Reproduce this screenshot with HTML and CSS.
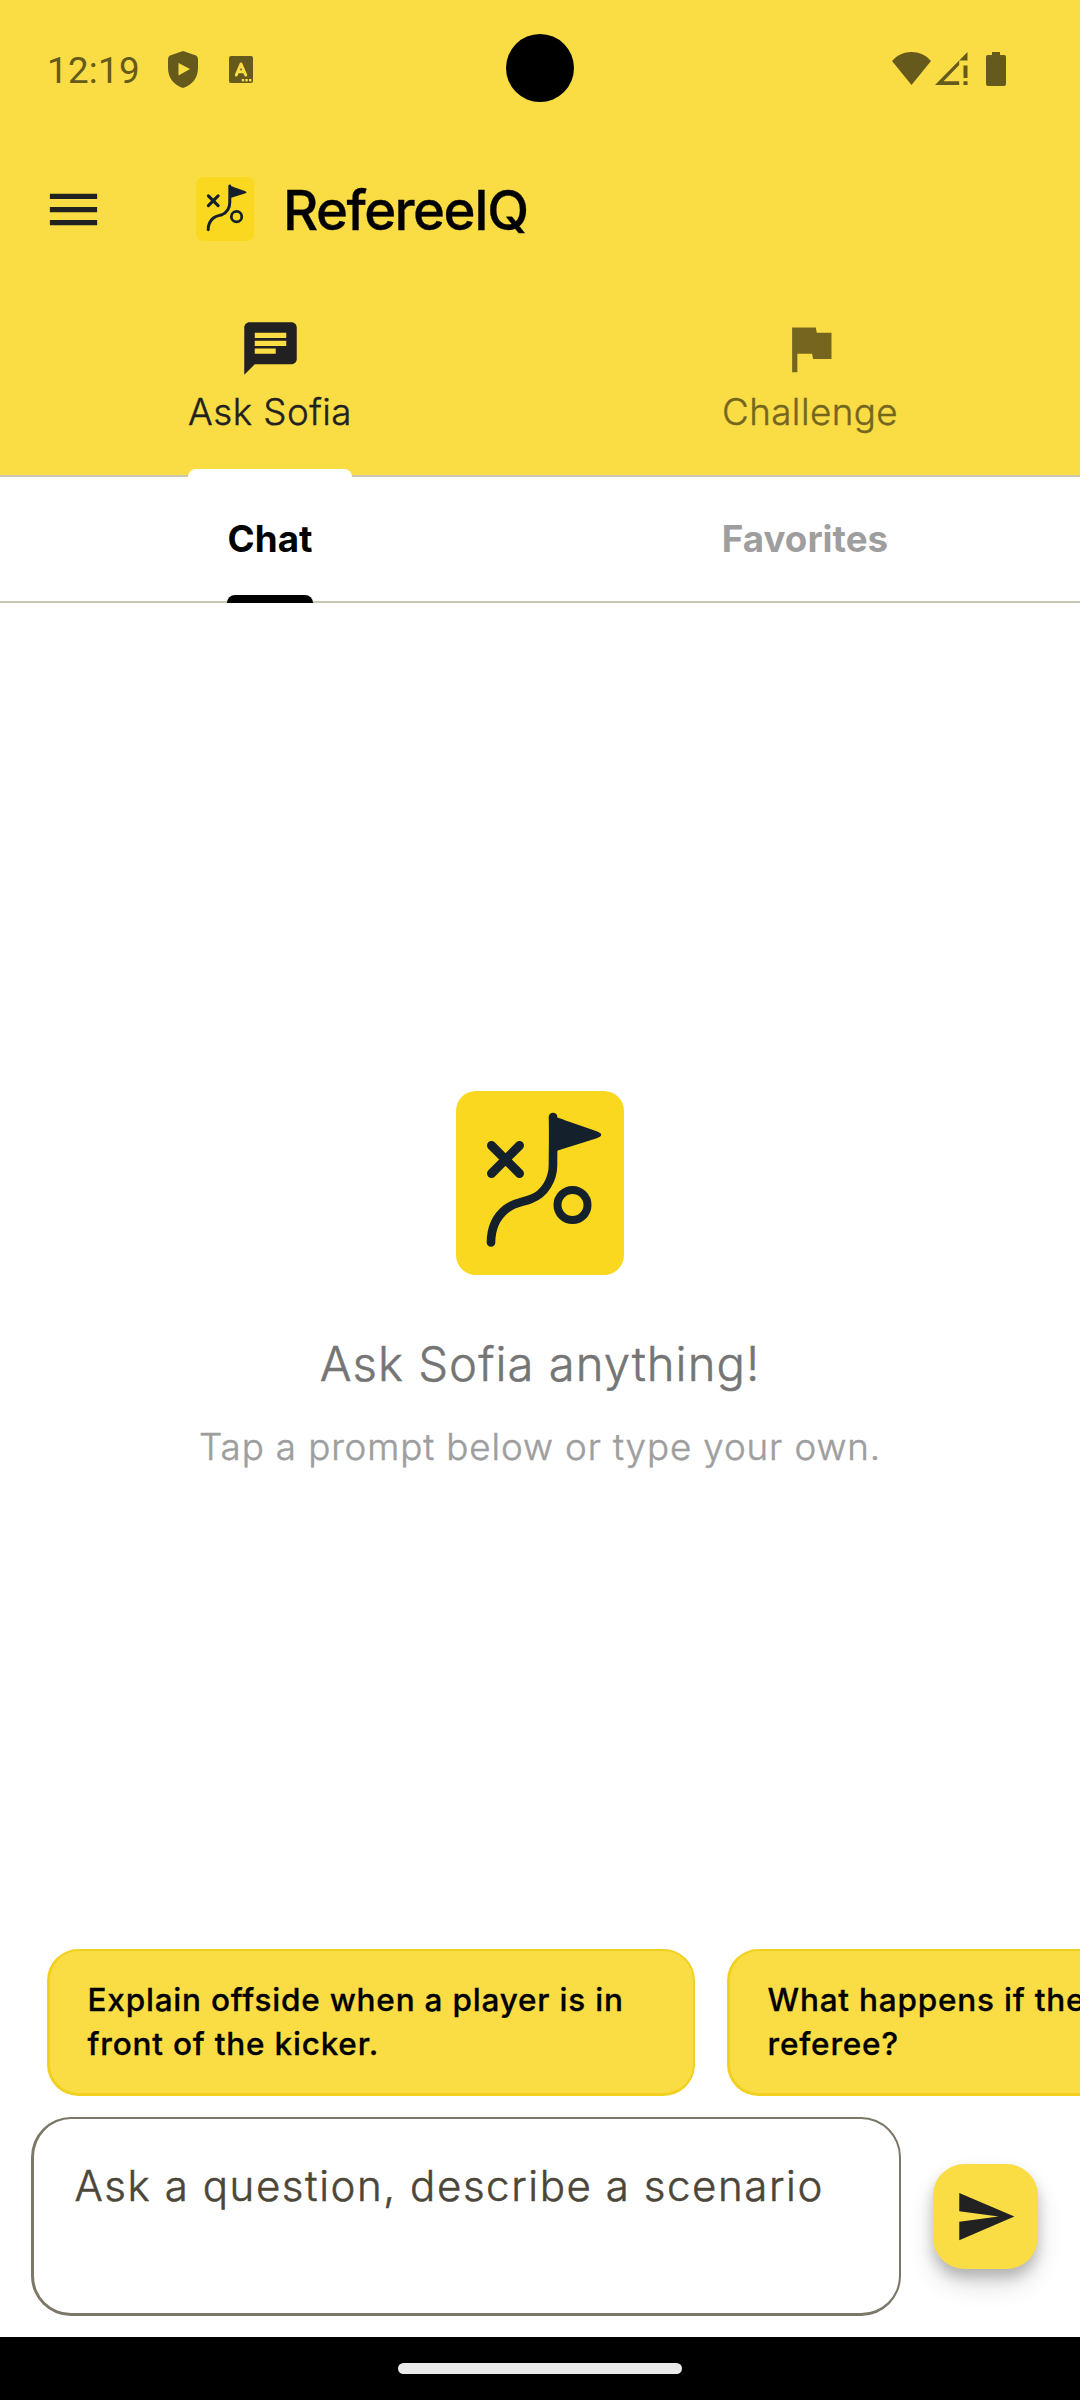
FILE: index.html
```html
<!DOCTYPE html>
<html lang="en">
<head>
<meta charset="utf-8">
<title>RefereeIQ</title>
<link rel="stylesheet" href="styles.css">
</head>
<body>
<svg class="defs" aria-hidden="true">
  <symbol id="logo" viewBox="0 0 168 184">
    <rect width="168" height="184" rx="20" fill="#f9d81f"/>
    <g fill="none" stroke="#14202b" stroke-width="9" stroke-linecap="round" stroke-linejoin="round">
      <path d="M35.5 54.5 63.5 82.500M63.500 54.500 35.500 82.500"/>
      <path stroke-width="8.600" d="M97 26C97.500 42 97 58 97 74C97 88 89 103 75 108C68 111 59 111 50 118C40 126 35 138 35 151.500"/>
      <circle stroke-width="8" cx="116.500" cy="114" r="15"/>
    </g>
    <path d="M97 26C102 26 108 29 114 31L140 40C147 42.500 147 45 140 47.500L97 61Z" fill="#14202b"/>
  </symbol>
</svg>
<div class="screen">
  <header class="top">
    <div class="status">
      <div class="status-left">
        <span class="clock">12:19</span>
        <svg class="shield" viewBox="0 0 30 37"><path fill-rule="evenodd" d="M15 0 28 4.500Q30 5.500 30 8V17C30 27 24 34 15 37C6 34 0 27 0 17V8Q0 5.500 2 4.500ZM10.500 12V24.500L22 18Z"/></svg>
        <svg class="lang" viewBox="0 0 24 27"><rect width="24" height="27" rx="2"/><g class="cut-line"><path d="M7.300 19 12 8 16.700 19M9 15.800H15"/></g><g class="cut"><rect x="12.800" y="23" width="2.400" height="2.400"/><rect x="16.400" y="23" width="2.400" height="2.400"/><rect x="20" y="23" width="2.400" height="2.400"/></g></svg>
      </div>
      <div class="camera"></div>
      <div class="status-right">
        <svg class="wifi" viewBox="0 0 39 33"><path d="M0 9C10-3 29-3 39 9L19.500 33Z"/></svg>
        <svg class="signal" viewBox="0 0 33 33"><path fill-rule="evenodd" d="M32.500 0V8.500H24.200V13L8.500 29.300H24.200V33H0ZM28.500 13.500H32.500V26H28.500ZM28.500 29.300H32.500V33H28.500Z"/></svg>
        <svg class="battery" viewBox="0 0 20 34"><path d="M6 0H14V3H18Q20 3 20 5V32Q20 34 18 34H2Q0 34 0 32V5Q0 3 2 3H6Z"/></svg>
      </div>
    </div>
    <div class="appbar">
      <svg class="icon" viewBox="0 0 24 24"><path d="M3 18h18v-2H3v2zm0-5h18v-2H3v2zm0-7v2h18V6H3z"/></svg>
      <svg class="brand-logo"><use href="#logo"/></svg>
      <h1 class="brand">RefereeIQ</h1>
    </div>
    <nav class="tabs">
      <a class="tab active">
        <svg class="icon" viewBox="0 0 24 24"><path d="M20 2H4c-1.100 0-1.990.900-1.990 2L2 22l4-4h14c1.100 0 2-.900 2-2V4c0-1.100-.900-2-2-2zM6 9h12v2H6V9zm8 5H6v-2h8v2zm4-6H6V6h12v2z"/></svg>
        <span class="tab-label">Ask Sofia</span>
      </a>
      <a class="tab">
        <svg class="icon" viewBox="0 0 24 24"><path d="M14.400 6L14 4H5v17h2v-7h5.600l.400 2h7V6z"/></svg>
        <span class="tab-label">Challenge</span>
      </a>
    </nav>
  </header>
  <nav class="subtabs">
    <a class="subtab selected"><span>Chat</span></a>
    <a class="subtab"><span>Favorites</span></a>
  </nav>
  <main class="empty">
    <svg class="hero-logo"><use href="#logo"/></svg>
    <p class="headline">Ask Sofia anything!</p>
    <p class="hint">Tap a prompt below or type your own.</p>
  </main>
  <div class="prompts">
    <button class="chip">Explain offside when a player is in<br>front of the kicker.</button>
    <button class="chip">What happens if the ball hits the<br>referee?</button>
  </div>
  <div class="composer">
    <div class="field">Ask a question, describe a scenario</div>
    <button class="send"><svg class="icon" viewBox="0 0 24 24"><path d="M2.010 21L23 12 2.010 3 2 10l15 2-15 2z"/></svg></button>
  </div>
  <footer class="navbar"><div class="pill"></div></footer>
</div>
</body>
</html>
```

FILE: styles.css
```css
* { box-sizing: border-box; }
body { margin: 0; background: #fff; font-family: Inter, "Open Sans", sans-serif; }
h1, p { margin: 0; }
button { font: inherit; border: 0; }
.defs { position: absolute; width: 0; height: 0; }
.screen { width: 1080px; height: 2400px; display: flex; flex-direction: column; overflow: hidden; background: #fff; }
.icon { width: 63px; height: 63px; fill: #212121; display: block; flex: none; }

.top { height: 477px; flex: none; background: #fadd45; border-bottom: 2px solid #cdc5b4; display: flex; flex-direction: column; }
.status { height: 136px; flex: none; display: grid; grid-template-columns: 1fr 68px 1fr; align-items: center; fill: #655a1c; color: #655a1c; }
.status-left { display: flex; align-items: center; padding: 6px 0 0 47px; }
.clock { width: 121px; font: 36.75px/40px Roboto, sans-serif; letter-spacing: 0.28px; }
.shield { width: 30px; height: 37px; margin-top: -4px; }
.lang { width: 24px; height: 27px; margin: -4px 0 0 31px; }
.cut { fill: #fadd45; }
.cut-line { fill: none; stroke: #fadd45; stroke-width: 3; stroke-linecap: round; stroke-linejoin: round; }
.camera { width: 68px; height: 68px; border-radius: 50%; background: #000; }
.status-right { display: flex; justify-content: flex-end; align-items: flex-start; padding: 1px 74px 0 0; }
.wifi { width: 39px; height: 33px; }
.signal { width: 33px; height: 33px; margin: 0 18px 0 4px; }
.battery { width: 20px; height: 34px; }

.appbar { height: 147px; flex: none; display: flex; align-items: center; padding: 0 42px; }
.brand-logo { width: 58.500px; height: 64px; margin: -2px 0 0 91px; flex: none; }
.brand { margin-left: 28.500px; font-size: 54.500px; font-weight: 500; letter-spacing: -1.550px; line-height: 64px; color: #000; -webkit-text-stroke: 0.3px currentColor; }

.tabs { flex: 1; display: grid; grid-template-columns: 1fr 1fr; }
.tab { position: relative; display: flex; flex-direction: column; align-items: center; padding-top: 33.500px; color: #74661f; }
.tab .icon { fill: currentColor; }
.tab.active { color: #212121; }
.tab-label { font-size: 36.75px; font-weight: 300; line-height: 52px; margin-top: 6px; letter-spacing: 0.45px; -webkit-text-stroke: 0.4px currentColor; }
.tab.active::after { content: ""; position: absolute; left: 188px; bottom: -2px; width: 164px; height: 8px; background: #fff; border-radius: 8px 8px 0 0; }

.subtabs { height: 126px; flex: none; display: grid; grid-template-columns: 1fr 1fr; border-bottom: 2px solid #cdc5b4; font-size: 36.75px; font-weight: 700; line-height: 124px; text-align: center; }
.subtab { position: relative; color: #9e9e9e; }
.subtab:last-child { padding-right: 10px; }
.subtab.selected { color: #000; }
.subtab.selected::after { content: ""; position: absolute; left: 227px; bottom: -2px; width: 86px; height: 8px; background: #000; border-radius: 8px 8px 0 0; }

.empty { flex: 1; display: flex; flex-direction: column; align-items: center; padding-top: 488px; font-weight: 300; -webkit-text-stroke: 0.5px currentColor; }
.hero-logo { width: 168px; height: 184px; }
.headline { margin-top: 55px; font-size: 47.25px; line-height: 68px; letter-spacing: 1.010px; color: #757575; }
.hint { margin-top: 23px; font-size: 36.75px; line-height: 52px; letter-spacing: 0.88px; color: #9e9e9e; }

.prompts { height: 147px; flex: none; display: flex; gap: 32px; padding-left: 47px; overflow: hidden; }
.chip { width: 648px; flex: none; padding: 0 0 0 37.500px; text-align: left; white-space: nowrap; background: #fadd45; border: solid #f1d01f; border-width: 2px 2px 3px 3px; border-radius: 31.500px; font-size: 31.500px; font-weight: 500; line-height: 44px; letter-spacing: 0.8px; color: #000; -webkit-text-stroke: 0.3px currentColor; }
.composer { height: 241px; flex: none; display: flex; align-items: flex-start; padding: 21px 42px 0 31px; }
.field { width: 870px; height: 199px; border: solid #7c7767; border-width: 2px 2px 3px 3px; border-radius: 40px; padding: 37px 0 0 40.500px; font-size: 42px; font-weight: 300; line-height: 60px; letter-spacing: 1.570px; color: #4c4639; white-space: nowrap; -webkit-text-stroke: 0.5px currentColor; }
.send { width: 105px; height: 105px; margin: 47px 0 0 32px; padding: 0 0 0 21px; border-radius: 31.500px; background: #fadd45; box-shadow: 0 15px 26px rgba(0,0,0,.14), 0 8px 13px rgba(0,0,0,.2); }
.navbar { height: 63px; flex: none; background: #000; display: flex; justify-content: center; padding-top: 26px; }
.pill { width: 284px; height: 11px; border-radius: 5.500px; background: #ebebeb; }
```
